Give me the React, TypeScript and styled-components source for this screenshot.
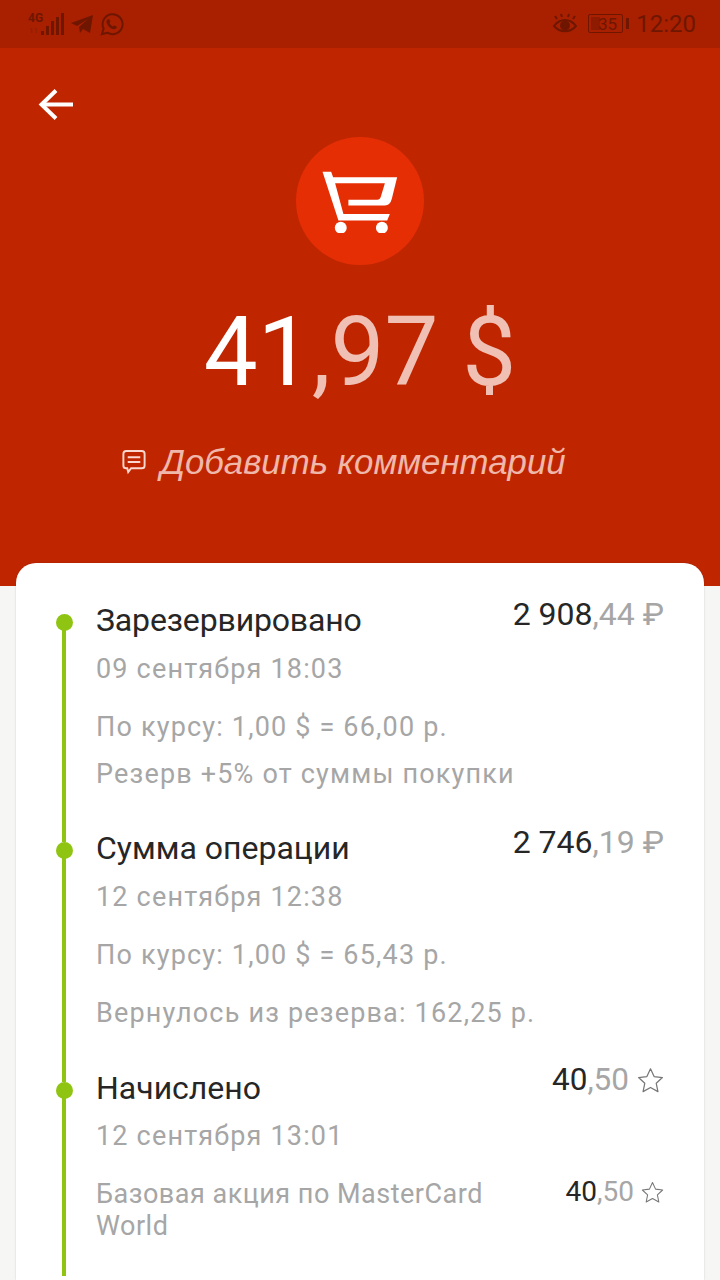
import React from "react";
import styled, { createGlobalStyle } from "styled-components";

const Global = createGlobalStyle`
  html, body { margin: 0; padding: 0; background: #f6f6f4; }
  body { font-family: Roboto, "Noto Sans", sans-serif; width: 720px; height: 1280px; overflow: hidden; }
`;
const Page = styled.div`width: 720px; height: 1280px; overflow: hidden; display: flex; flex-direction: column;`;
const StatusBar = styled.div`
  height: 48px; flex: none; background: #a82000; color: #6f1600; display: flex; align-items: center;
  justify-content: space-between; padding: 0 24px 0 28px; box-sizing: border-box;
`;
const StatusGroup = styled.div`display: flex; align-items: center; gap: ${p => p.$gap ?? 8}px;`;
const Clock = styled.span`font-size: 24px; line-height: 48px; margin-left: -3px;`;
const Header = styled.header`
  height: 538px; flex: none; background: #bf2600; display: flex; flex-direction: column; align-items: center;
  box-sizing: border-box; position: relative; padding-top: 89px;
`;
const Back = styled.div`position: absolute; left: 38px; top: 39px; width: 36px; height: 36px; line-height: 0;`;
const Badge = styled.div`
  width: 128px; height: 128px; border-radius: 50%; background: #e62e04; display: flex; align-items: center; justify-content: center;
`;
const Amount = styled.div`
  margin-top: 31px; font-size: 96px; line-height: 112px; color: #fff; font-weight: 400; white-space: nowrap;
`;
const Dim = styled.span`color: ${p => p.$c};`;
const CommentRow = styled.div`
  margin-top: 32px; padding-right: 34px; display: flex; align-items: center; gap: 12px; color: #efb8ab;
  font-family: "Liberation Sans", Arial, sans-serif; font-style: italic; font-size: 34.8px; line-height: 44px; white-space: nowrap;
`;
const Card = styled.main`
  margin: -23px 16px 0; flex: 1; background: #fff; border-radius: 20px 20px 0 0; box-sizing: border-box;
  padding: 37px 40px 0; box-shadow: 0 0 2px rgba(0,0,0,.18); position: relative; display: flex; flex-direction: column;
`;
const Entry = styled.section`
  display: grid; grid-template-columns: 16px 1fr; column-gap: 24px; height: ${p => p.$h}px; flex: none;
`;
const Rail = styled.div`display: flex; flex-direction: column; align-items: center; padding-top: 14px;`;
const Dot = styled.div`width: 17px; height: 17px; border-radius: 50%; background: #8fc512; flex: none; margin-bottom: -4px; position: relative; z-index: 1;`;
const Line = styled.div`width: 4px; flex: 1; background: #8fc512; margin-bottom: -14px;`;
const Body = styled.div`min-width: 0; color: #a6a6a6;`;
const Head = styled.div`display: flex; justify-content: space-between; align-items: flex-start; margin-top: -2px; height: 44px;`;
const Title = styled.h2`margin: 0; font-weight: 400; font-size: 32px; line-height: 44px; color: #262626; white-space: nowrap; letter-spacing: ${p => p.$ls ?? 0}px;`;
const Value = styled.div`
  font-size: ${p => p.$s ?? 32}px; line-height: ${p => p.$lh ?? 36}px; color: #262626; white-space: nowrap; display: flex; align-items: center;
  margin-top: ${p => p.$mt ?? 0}px;
`;
const Info = styled.div`
  font-size: 27px; line-height: 32px; letter-spacing: 1.18px; margin-top: ${p => p.$mt ?? 0}px; white-space: nowrap;
`;
const Row = styled.div`display: flex; justify-content: space-between; align-items: flex-start; margin-top: 26px;`;
const Wrap = styled.div`font-size: 27px; line-height: 32px; letter-spacing: .5px; width: 400px;`;
const StarBox = styled.span`display: inline-flex; margin-left: ${p => p.$m}px; line-height: 0;`;

const Star = ({ size }: { size: number }) => (
  <svg width={size} height={size} viewBox="0 0 24 24" fill="none" stroke="#777" strokeWidth="1.1" strokeLinejoin="round">
    <path d="M12 1.6l3.2 6.9 7.4.9-5.500 5.100 1.500 7.400-6.600-3.700-6.600 3.700 1.500-7.400L1.400 9.400l7.400-.9z" />
  </svg>
);
const Money = ({ a, b }: any) => (
  <Value $mt={-2}>{a}<Dim $c="#a6a6a6">,{b} ₽</Dim></Value>
);

export default function App() {
  return (
    <Page>
      <Global />
      <StatusBar>
        <StatusGroup $gap={6}>
          <svg width="36" height="24" viewBox="0 0 36 24">
            <text x="0" y="10" fontFamily="Roboto" fontWeight="700" fontSize="12" fill="#6f1600">4G</text>
            <text x="1" y="21" fontFamily="Roboto" fontSize="8" fill="#8e1b00">11</text>
            <g fill="#6f1600"><rect x="13" y="19" width="3" height="4" /><rect x="18" y="14" width="3" height="9" /><rect x="23" y="9" width="3" height="14" /><rect x="28" y="5" width="3" height="18" /><rect x="33" y="1" width="3" height="22" /></g>
          </svg>
          <svg width="24" height="22" viewBox="0 0 24 22"><path fill="#6f1600" d="M1 10L23 2l-3 18-7-4-3 4-1-6 9-8-11 7z" /></svg>
          <svg width="24" height="24" viewBox="0 0 24 24" fill="none" stroke="#6f1600" strokeWidth="2"><path d="M2 22l1.600-5.500A10 10 0 1 1 7.400 20.700z" /><path fill="#6f1600" stroke="none" d="M9 7l1.400 2.800-1 1.300c.8 1.500 2 2.600 3.500 3.300l1.300-1 2.800 1.300c-.2 1.600-1.400 2.500-3 2.500-3.600-.3-7.300-4-7.600-7.500C6.400 8.300 7.400 7.200 9 7z" /></svg>
        </StatusGroup>
        <StatusGroup $gap={10}>
          <svg width="26" height="24" viewBox="0 0 26 24" fill="none" stroke="#6f1600" strokeWidth="2"><path d="M2 14c6-8 16-8 22 0-6 7-16 7-22 0z" /><circle cx="13" cy="13.500" r="4" fill="#6f1600" /><path d="M5 7L3 4M10 5L9 2M16 5l1-3M21 7l2-3" /></svg>
          <svg width="41" height="20" viewBox="0 0 41 20" fill="none"><rect x=".5" y=".5" width="34" height="18" rx="1.500" stroke="#6f1600" /><rect x="3" y="3" width="9" height="13" fill="#8e1b00" /><text x="10" y="16" fontFamily="Roboto" fontSize="17" fill="#6f1600">35</text><rect x="38" y="4" width="3" height="11" fill="#6f1600" /></svg>
          <Clock>12:20</Clock>
        </StatusGroup>
      </StatusBar>
      <Header>
        <Back>
          <svg width="36" height="36" viewBox="0 0 36 36" fill="none" stroke="#fff" strokeWidth="4"><path d="M35 17.500H4" /><path d="M18 3.500L3.500 17.500 18 31.500" /></svg>
        </Back>
        <Badge>
          <svg width="80" height="63" viewBox="150 145 240 190" fill="#fff">
            <path d="M157 150H183L189 167H382L366 232Q361 252 345 252H235V235H322Q330 235 333 225L345 185H195L220 278H360L352 297H205Z" />
            <circle cx="212" cy="319" r="18" /><circle cx="336" cy="319" r="18" />
          </svg>
        </Badge>
        <Amount>41<Dim $c="#f1c0b4">,97 $</Dim></Amount>
        <CommentRow>
          <svg width="28" height="27" viewBox="0 0 26 28" fill="none" stroke="#fbd8cf" strokeWidth="2"><path d="M5 2h16a3 3 0 0 1 3 3v12a3 3 0 0 1-3 3H10l-3 4-1-4H5a3 3 0 0 1-3-3V5a3 3 0 0 1 3-3z" /><path d="M6.500 8.500h13M6.500 13.500h13" /></svg>
          <span>Добавить комментарий</span>
        </CommentRow>
      </Header>
      <Card>
        <Entry $h={228}>
          <Rail><Dot /><Line /></Rail>
          <Body>
            <Head><Title $ls={-0.15}>Зарезервировано</Title><Money a="2 908" b="44" /></Head>
            <Info $mt={11}>09 сентября 18:03</Info>
            <Info $mt={26}>По курсу: 1,00 $ = 66,00 р.</Info>
            <Info $mt={15}>Резерв +5% от суммы покупки</Info>
          </Body>
        </Entry>
        <Entry $h={240}>
          <Rail><Dot /><Line /></Rail>
          <Body>
            <Head><Title>Сумма операции</Title><Money a="2 746" b="19" /></Head>
            <Info $mt={11}>12 сентября 12:38</Info>
            <Info $mt={26}>По курсу: 1,00 $ = 65,43 р.</Info>
            <Info $mt={26}>Вернулось из резерва: 162,25 р.</Info>
          </Body>
        </Entry>
        <Entry $h={194}>
          <Rail><Dot /><Line /></Rail>
          <Body>
            <Head><Title>Начислено</Title><Value $s={31.5} $mt={-4}>40<Dim $c="#a6a6a6">,50</Dim><StarBox $m={8}><Star size={27} /></StarBox></Value></Head>
            <Info $mt={10}>12 сентября 13:01</Info>
            <Row>
              <Wrap>Базовая акция по MasterCard World</Wrap>
              <Value $s={28} $lh={32} $mt={-2}>40<Dim $c="#a6a6a6">,50</Dim><StarBox $m={7}><Star size={23} /></StarBox></Value>
            </Row>
          </Body>
        </Entry>
      </Card>
    </Page>
  );
}
